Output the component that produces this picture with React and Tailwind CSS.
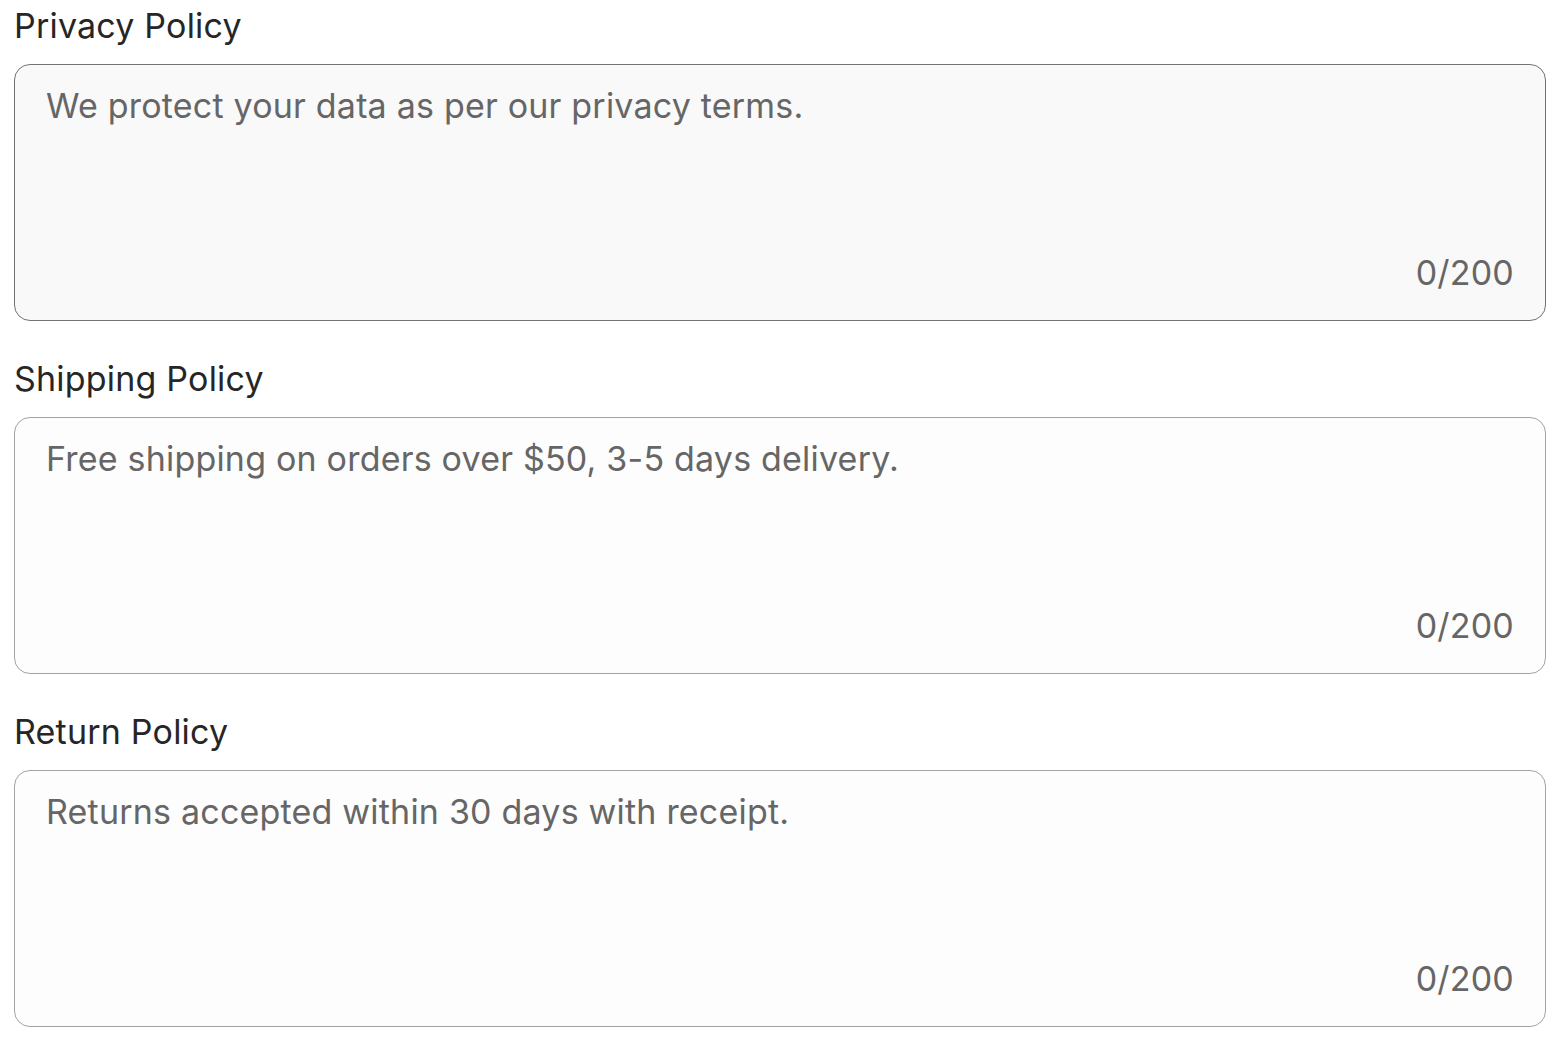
import { useState } from 'react';

const POLICIES = [
  { id: 'privacy', label: 'Privacy Policy', placeholder: 'We protect your data as per our privacy terms.', active: true },
  { id: 'shipping', label: 'Shipping Policy', placeholder: 'Free shipping on orders over $50, 3-5 days delivery.' },
  { id: 'return', label: 'Return Policy', placeholder: 'Returns accepted within 30 days with receipt.' },
];

function PolicyField({ policy, last }) {
  const [value, setValue] = useState('');
  const boxClass = policy.active
    ? 'border-[#737373] bg-[#f9f9f9]'
    : 'border-[#a3a3a3] bg-[#fdfdfd]';

  return (
    <div className={last ? '' : 'mb-[32px]'}>
      <label htmlFor={policy.id} className="block pt-[2px] text-[34px] tracking-[0.2px] leading-[48px] text-[#262626] mb-[14px]">
        {policy.label}
      </label>
      <div className={`relative h-[257px] w-[1532px] rounded-[16px] border ${boxClass}`}>
        <textarea
          id={policy.id}
          value={value}
          maxLength={200}
          onChange={(e) => setValue(e.target.value)}
          placeholder={policy.placeholder}
          className="block w-full h-[190px] resize-none bg-transparent outline-none px-[31px] pt-[17px] text-[34px] tracking-[0.2px] leading-[48px] text-[#262626] placeholder:text-[#666666]"
        />
        <span className="absolute right-[31px] bottom-[23px] text-[34px] tracking-[0.2px] leading-[48px] text-[#666666]">
          {value.length}/200
        </span>
      </div>
    </div>
  );
}

export default function App() {
  return (
    <div className="min-h-screen bg-white pl-[14px]" style={{ fontFamily: 'Inter, "Noto Sans", sans-serif' }}>
      {POLICIES.map((p, i) => (
        <PolicyField key={p.id} policy={p} last={i === POLICIES.length - 1} />
      ))}
    </div>
  );
}
